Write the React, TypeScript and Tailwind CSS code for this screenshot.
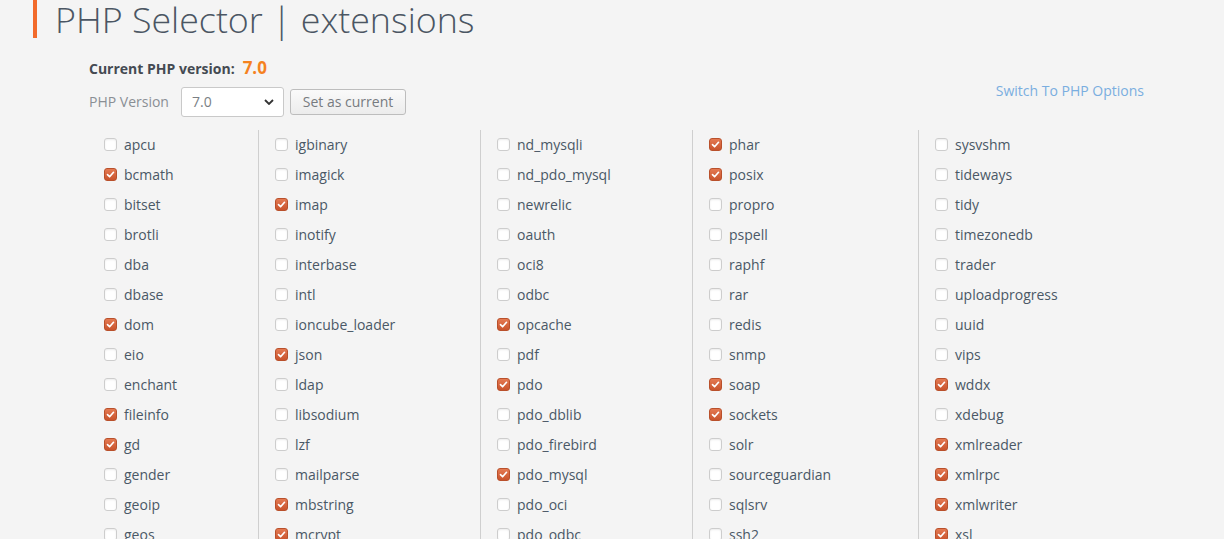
import React from "react";

type Ext = { name: string; on?: boolean };

const COLUMNS: { width: string; items: Ext[] }[] = [
  {
    width: "w-[170px]",
    items: [
      { name: "apcu" },
      { name: "bcmath", on: true },
      { name: "bitset" },
      { name: "brotli" },
      { name: "dba" },
      { name: "dbase" },
      { name: "dom", on: true },
      { name: "eio" },
      { name: "enchant" },
      { name: "fileinfo", on: true },
      { name: "gd", on: true },
      { name: "gender" },
      { name: "geoip" },
      { name: "geos" },
    ],
  },
  {
    width: "w-[222px]",
    items: [
      { name: "igbinary" },
      { name: "imagick" },
      { name: "imap", on: true },
      { name: "inotify" },
      { name: "interbase" },
      { name: "intl" },
      { name: "ioncube_loader" },
      { name: "json", on: true },
      { name: "ldap" },
      { name: "libsodium" },
      { name: "lzf" },
      { name: "mailparse" },
      { name: "mbstring", on: true },
      { name: "mcrypt", on: true },
    ],
  },
  {
    width: "w-[212px]",
    items: [
      { name: "nd_mysqli" },
      { name: "nd_pdo_mysql" },
      { name: "newrelic" },
      { name: "oauth" },
      { name: "oci8" },
      { name: "odbc" },
      { name: "opcache", on: true },
      { name: "pdf" },
      { name: "pdo", on: true },
      { name: "pdo_dblib" },
      { name: "pdo_firebird" },
      { name: "pdo_mysql", on: true },
      { name: "pdo_oci" },
      { name: "pdo_odbc" },
    ],
  },
  {
    width: "w-[226px]",
    items: [
      { name: "phar", on: true },
      { name: "posix", on: true },
      { name: "propro" },
      { name: "pspell" },
      { name: "raphf" },
      { name: "rar" },
      { name: "redis" },
      { name: "snmp" },
      { name: "soap", on: true },
      { name: "sockets", on: true },
      { name: "solr" },
      { name: "sourceguardian" },
      { name: "sqlsrv" },
      { name: "ssh2" },
    ],
  },
  {
    width: "w-[220px]",
    items: [
      { name: "sysvshm" },
      { name: "tideways" },
      { name: "tidy" },
      { name: "timezonedb" },
      { name: "trader" },
      { name: "uploadprogress" },
      { name: "uuid" },
      { name: "vips" },
      { name: "wddx", on: true },
      { name: "xdebug" },
      { name: "xmlreader", on: true },
      { name: "xmlrpc", on: true },
      { name: "xmlwriter", on: true },
      { name: "xsl", on: true },
    ],
  },
];

function Check({ on }: { on?: boolean }) {
  if (on) {
    return (
      <span className="flex h-[13px] w-[13px] shrink-0 items-center justify-center rounded-[3px] border border-[#b9502b] bg-gradient-to-b from-[#e47a52] to-[#c9532c]">
        <svg viewBox="0 0 12 12" className="h-[9px] w-[9px]">
          <path d="M2 6.2 L4.8 9 L10 3" fill="none" stroke="#fff" strokeWidth="2.2" strokeLinecap="round" strokeLinejoin="round" />
        </svg>
      </span>
    );
  }
  return <span className="h-[13px] w-[13px] shrink-0 rounded-[3px] border border-[#cdcdcd] bg-white shadow-[inset_0_1px_2px_rgba(0,0,0,0.08)]" />;
}

export default function App() {
  return (
    <div className="h-screen overflow-hidden bg-[#f4f4f4] font-['Open_Sans','Liberation_Sans',sans-serif]">
      <div className="flex h-[38px] items-start">
        <span className="ml-[33px] h-[38px] w-[4px] shrink-0 bg-[#f26a2b]" />
        <h1 className="ml-[18px] mt-[-5px] whitespace-nowrap text-[35.8px] font-light leading-[48px] text-[#4b5663]">
          PHP Selector | extensions
        </h1>
      </div>

      <div className="flex items-start justify-between pl-[89px] pr-[80px]">
        <div>
          <div className="mt-[17px] flex items-baseline text-[14px] font-bold text-[#444a52]">
            Current PHP version:
            <span className="ml-[8px] text-[17px] text-[#f5821f]">7.0</span>
          </div>
          <div className="mt-[6px] flex items-center">
            <span className="w-[92px] text-[14px] text-[#8a8f94]">PHP Version</span>
            <div className="flex h-[30px] w-[103px] items-center justify-between rounded-[3px] border border-[#c9c9c9] bg-white pl-[10px] pr-[9px] text-[14px] text-[#7a7f85]">
              7.0
              <svg viewBox="0 0 10 6" className="h-[6px] w-[10px]">
                <path d="M1 1 L5 5 L9 1" fill="none" stroke="#333" strokeWidth="1.8" />
              </svg>
            </div>
            <button className="ml-[6px] h-[26px] w-[116px] rounded-[3px] border border-[#bdbdbd] bg-gradient-to-b from-[#fafafa] to-[#ececec] text-[14px] text-[#777b80]">
              Set as current
            </button>
          </div>
        </div>
        <a className="mt-[42px] text-[14px] text-[#7aaee0]">Switch To PHP Options</a>
      </div>

      <div className="mt-[13px] flex pl-[88px]">
        {COLUMNS.map((col, ci) => (
          <div key={ci} className={`${col.width} ${ci > 0 ? "border-l border-[#cfcfcf]" : ""} pl-[16px]`}>
            {col.items.map((ext) => (
              <div key={ext.name} className="flex h-[30px] items-center gap-[7px] text-[14px] text-[#4a5866]">
                <Check on={ext.on} />
                <span>{ext.name}</span>
              </div>
            ))}
          </div>
        ))}
      </div>
    </div>
  );
}
